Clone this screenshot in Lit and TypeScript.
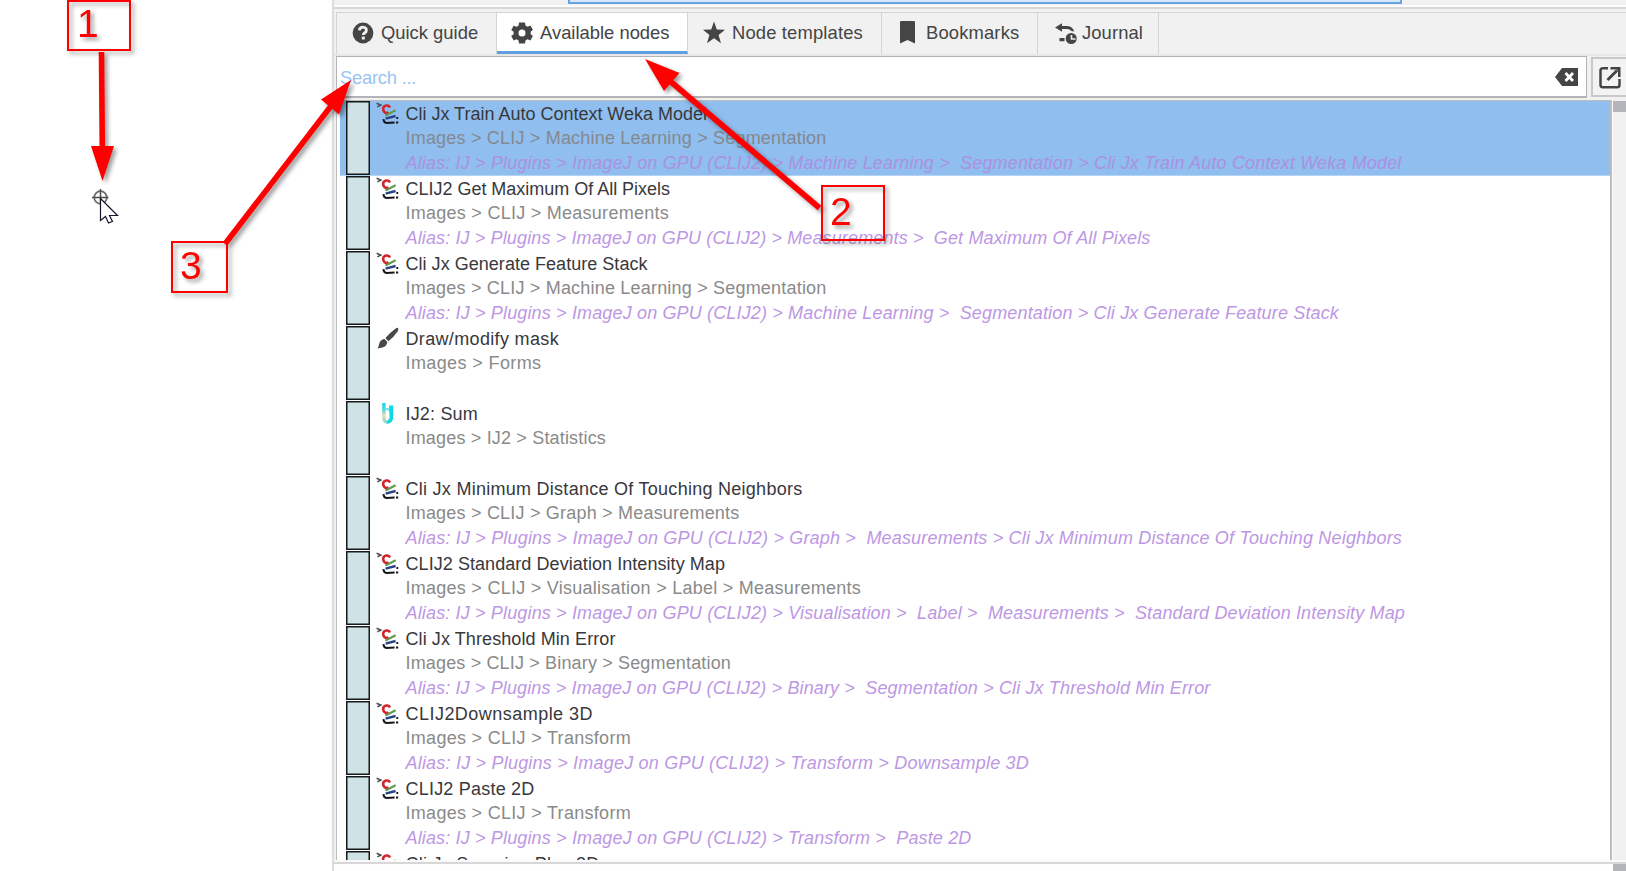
import { LitElement, html, css, svg, nothing } from "lit";
import { customElement } from "lit/decorators.js";

type IconKind = "clij" | "brush" | "ij";
/** `widths` holds the line lengths in pixels: title, path, alias. */
interface NodeRow { icon: IconKind; title: string; path: string; alias?: string; selected?: boolean; widths: number[]; }

const IJ = "Alias: IJ > Plugins > ImageJ on GPU (CLIJ2) > ";
const rows: NodeRow[] = [
  { icon: "clij", title: "Cli Jx Train Auto Context Weka Model", path: "Images > CLIJ > Machine Learning > Segmentation", alias: IJ + "Machine Learning >  Segmentation > Cli Jx Train Auto Context Weka Model", selected: true, widths: [301.5, 421, 996] },
  { icon: "clij", title: "CLIJ2 Get Maximum Of All Pixels", path: "Images > CLIJ > Measurements", alias: IJ + "Measurements >  Get Maximum Of All Pixels", widths: [264.5, 263.5, 745] },
  { icon: "clij", title: "Cli Jx Generate Feature Stack", path: "Images > CLIJ > Machine Learning > Segmentation", alias: IJ + "Machine Learning >  Segmentation > Cli Jx Generate Feature Stack", widths: [242, 421, 933.5] },
  { icon: "brush", title: "Draw/modify mask", path: "Images > Forms", widths: [153.5, 136] },
  { icon: "ij", title: "IJ2: Sum", path: "Images > IJ2 > Statistics", widths: [72.5, 200.5] },
  { icon: "clij", title: "Cli Jx Minimum Distance Of Touching Neighbors", path: "Images > CLIJ > Graph > Measurements", alias: IJ + "Graph >  Measurements > Cli Jx Minimum Distance Of Touching Neighbors", widths: [397, 334, 996.5] },
  { icon: "clij", title: "CLIJ2 Standard Deviation Intensity Map", path: "Images > CLIJ > Visualisation > Label > Measurements", alias: IJ + "Visualisation >  Label >  Measurements >  Standard Deviation Intensity Map", widths: [319.5, 455.5, 999.5] },
  { icon: "clij", title: "Cli Jx Threshold Min Error", path: "Images > CLIJ > Binary > Segmentation", alias: IJ + "Binary >  Segmentation > Cli Jx Threshold Min Error", widths: [210, 325.5, 805] },
  { icon: "clij", title: "CLIJ2Downsample 3D", path: "Images > CLIJ > Transform", alias: IJ + "Transform > Downsample 3D", widths: [187.5, 225.5, 623.5] },
  { icon: "clij", title: "CLIJ2 Paste 2D", path: "Images > CLIJ > Transform", alias: IJ + "Transform >  Paste 2D", widths: [129, 225.5, 566] },
  { icon: "clij", title: "Cli Jx Scorpion Plus 2D", path: "", widths: [194] },
];

const nodeIcons = {
  clij: svg`
    <path d="M.6 1.2 L4.8 3 L1.4 4.8" fill="none" stroke="#4c4c50" stroke-width="1.5"/>
    <path d="M14 5.6 C12.6 2.2 7.8 3.2 7.2 6.2 C6.8 9.6 9.6 12.4 12.6 10.4" fill="none" stroke="#d3232e" stroke-width="2.6"/>
    <path d="M9.4 13.6 L19.6 8.2" stroke="#5c9a4c" stroke-width="2.2"/>
    <path d="M9.6 16.6 L19.6 14" stroke="#2b4386" stroke-width="2.4"/>
    <path d="M7.4 17.2 Q7.8 21 10.6 20.9 L18.6 20.4" fill="none" stroke="#15161a" stroke-width="2"/>
    <path d="M20 20.4 H22.2 M20.4 15.9 H22.2" stroke="#15161a" stroke-width="2"/>`,
  brush: svg`
    <path d="M22 1 Q23 2 21.6 4.4 Q17 11 12.4 14.2 L9.4 11 Q13 6.4 19 2 Q21.2.4 22 1Z" fill="#484848"/>
    <path d="M8.4 12 L11.4 15 Q10.4 19.6 6.6 20.4 Q4 21 1.6 21.6 Q2.6 20 3 17.6 Q4 12.6 8.4 12Z" fill="#484848"/>`,
  ij: svg`
    <defs><linearGradient id="g" x1="0" y1="0" x2="0" y2="1"><stop offset="0" stop-color="#12d6e8"/><stop offset=".35" stop-color="#55d8dc"/><stop offset=".6" stop-color="#f3dcae"/><stop offset="1" stop-color="#5fd6d4"/></linearGradient></defs>
    <path d="M6.2 1 H9.6 V15.5 Q10 19.4 13 20.2 L12 22 Q6.2 21 6.2 15.5Z" fill="url(#g)"/>
    <path d="M9.6 7.4 Q13 5.8 13.6 9.4" fill="none" stroke="#4fdce4" stroke-width="1.6"/>
    <path d="M13 3.4 H17.2 V15.6 Q17 21 11.6 21.8 L11.2 18.8 Q13.6 18 13.6 15Z" fill="#0ed8e4"/>`,
};

@customElement("search-tabs")
export class SearchTabs extends LitElement {
  static styles = css`
    :host { display: block; }
    .tabs { display: flex; height: 42px; box-sizing: border-box; border-top: 1px solid #d4d4d4; border-left: 1px solid #d4d4d4; }
    .tab { display: flex; align-items: center; box-sizing: border-box; height: 41px; border-right: 1px solid #d4d4d4; background: #f1f1f1; font-size: 18.4px; color: #444; white-space: pre; padding-bottom: 2px; }
    .tab svg { flex: none; width: 22px; height: 24px; margin-right: 7px; }
    .guide { width: 160px; padding-left: 15px; }
    .available { width: 191px; padding: 1px 0 0 14px; background: #fff; border-bottom: 3px solid #5f9fe0; }
    .templates { width: 194px; padding-left: 15px; letter-spacing: 0.15px; }
    .bookmarks { width: 156px; padding-left: 14px; letter-spacing: 0.15px; }
    .journal { width: 121px; padding-left: 17px; letter-spacing: 0.1px; }
    .bookmarks svg { margin-right: 8px; }
    .journal svg { margin-right: 5px; }
  `;
  render() {
    const c = "#454545";
    return html`<div class="tabs">
      <div class="tab guide"><svg viewBox="0 0 22 24"><circle cx="11" cy="12" r="10.4" fill=${c}/><path d="M7.4 9.4 Q7.6 6.2 11 6.2 Q14.4 6.4 14.4 9.3 Q14.3 11 12.5 12 Q11.3 12.8 11.3 14" fill="none" stroke="#f1f1f1" stroke-width="2.8"/><rect x="9.8" y="15.6" width="3" height="2.9" fill="#f1f1f1"/></svg><span>Quick guide</span></div>
      <div class="tab available"><svg viewBox="0 0 22 24"><path fill-rule="evenodd" fill=${c} d="M8 1.500h6l.5 3.100 2 1.100 2.900-1.100 2.500 4.200-2.200 2v2.400l2.200 1.900-2.500 4.300-2.900-1.100-2 1.200-.5 3H8l-.5-3-2-1.200-2.800 1.100L.2 15.100l2.400-1.900V10.800L.2 8.900l2.500-4.200 2.800 1.100 2-1.100zM11 8.500a3.500 3.500 0 1 0 0 7a3.500 3.500 0 1 0 0-7z"/></svg><span>Available nodes</span></div>
      <div class="tab templates"><svg viewBox="0 0 22 24"><path fill=${c} d="M11 .6l2.800 7.800 8.400.3-6.600 5.200 2.400 8.300-7-4.900-7 4.900 2.400-8.300L-.2 8.700l8.400-.3z"/></svg><span>Node templates</span></div>
      <div class="tab bookmarks"><svg viewBox="0 0 22 24"><path fill=${c} d="M5 0h13q1 0 1 1v21.500l-7.500-3.500-7.500 3.500V1q0-1 1-1z"/></svg><span>Bookmarks</span></div>
      <div class="tab journal"><svg viewBox="0 0 22 24"><path fill=${c} d="M0 6.500l7-4.300v2.800h5.500q4.800.3 6.800 5.600l-2.900-.6Q14.700 8 12.200 8H7v2.800zM4.500 17h5v3.200h-5z"/><circle cx="16.200" cy="17.500" r="5.500" fill=${c}/><path d="M16.500 14v4h4" fill="none" stroke="#f1f1f1" stroke-width="1.600"/></svg><span>Journal</span></div>
    </div>`;
  }
}

@customElement("node-row")
export class NodeRowElement extends LitElement {
  static properties = { row: { attribute: false } };
  declare row: NodeRow;
  static styles = css`
    :host { display: block; flex: none; }
    .row { display: flex; height: 75px; box-sizing: border-box; padding-left: 6px; background: #fff; }
    .selected { background: linear-gradient(#8fbeef 0 74px, #b4d4f4 74px 75px); }
    .bar { flex: none; width: 24px; height: 74px; box-sizing: border-box; border: 1px solid #15191a; background: #cfe2e5; box-shadow: inset 0 0 0 0.5px #15191a; }
    .icon { flex: none; width: 24px; height: 23px; margin: 1px 5px 0 6px; }
    .text { display: flex; flex-direction: column; white-space: pre; font-size: 18px; padding-left: 0.5px; }
    .title { height: 25px; line-height: 27px; color: #38383c; }
    .path { height: 24px; line-height: 25px; color: #8a8a8a; }
    .alias { height: 25px; line-height: 27px; color: #bd97e4; font-style: italic; }
    .selected .alias { color: #ac90e2; }
    .selected .path { color: #84898f; }
  `;
  /** Spreads each line's letters so that it fills its stated width. */
  protected firstUpdated() {
    this.renderRoot.querySelectorAll<HTMLElement>(".text span").forEach((line, i) => {
      const want = this.row.widths[i];
      const count = line.textContent?.length ?? 0;
      if (!want || !count) return;
      line.style.letterSpacing = `${(want - line.getBoundingClientRect().width) / count}px`;
    });
  }
  render() {
    const r = this.row;
    return html`<div class="row ${r.selected ? "selected" : ""}">
      <div class="bar"></div><svg class="icon" viewBox="0 0 24 23">${nodeIcons[r.icon]}</svg>
      <div class="text"><div class="title"><span>${r.title}</span></div>${r.path ? html`<div class="path"><span>${r.path}</span></div>` : nothing}${r.alias ? html`<div class="alias"><span>${r.alias}</span></div>` : nothing}</div>
    </div>`;
  }
}

@customElement("app-root")
export class AppRoot extends LitElement {
  static styles = css`
    :host { display: block; position: relative; width: 1626px; height: 871px; overflow: hidden; background: #fefefe; font-family: "Liberation Sans", Arial, sans-serif; }
    .page { display: flex; height: 100%; }
    .canvas { flex: none; width: 332px; background: #fff; }
    .side { flex: 1; min-width: 0; display: flex; flex-direction: column; box-sizing: border-box; border-left: 2px solid #dcdcdc; background: #f1f1f1; }
    .top { flex: none; display: flex; height: 7px; box-sizing: border-box; padding-left: 234px; border-bottom: 2px solid #fcfcfc; }
    .strip { width: 834px; height: 4px; box-sizing: border-box; border: 2px solid #67a3e4; border-top: 0; background: #d9e9fa; }
    .split { flex: none; height: 2px; background: #d7d7d7; margin-bottom: 3px; }
    .tabs { display: block; margin-left: 2px; }
    .seam { flex: none; height: 2px; background: #e7e7e7; }
    .search { flex: none; display: flex; height: 44px; gap: 4px; padding-left: 2px; box-sizing: border-box; }
    .field { flex: none; width: 1251px; height: 42px; box-sizing: border-box; border: 1px solid #b4b4b8; border-bottom-width: 2px; background: #fff; display: flex; align-items: center; justify-content: space-between; padding: 2px 7px 0 3px; font-size: 18.4px; letter-spacing: -0.25px; color: #9ac4f1; }
    .clear { width: 25px; height: 20px; margin-bottom: 2px; }
    .open { flex: none; width: 42px; height: 40px; margin-top: 1px; box-sizing: border-box; border: 2px solid #c9c9cd; background: #f3f3f3; padding: 7px 0 0 6px; }
    .open svg { width: 22px; height: 23px; display: block; }
    .body { flex: none; display: flex; height: 760px; padding-left: 2px; box-sizing: border-box; background: #f1f1f1; }
    .list { width: 1276px; height: 760px; box-sizing: border-box; border: 1px solid #bdbdbd; border-bottom: 0; border-right-width: 2px; background: #fff; padding-left: 3px; overflow: hidden; display: flex; flex-direction: column; }
    .track { flex: 1; border-left: 1px solid #fcfcfc; }
    .thumb { height: 11px; background: #b4b5ba; margin-top: 1px; }
    .base { flex: none; height: 11px; border-top: 2px solid #fafafa; box-sizing: border-box; display: flex; background: #fefefe; }
    .rule { flex: 1; border-top: 2px solid #d7d7d7; display: flex; justify-content: flex-end; }
    .corner { width: 13px; height: 7px; background: #b4b5ba; }
    .notes { position: absolute; left: 0; top: 0; width: 1626px; height: 871px; pointer-events: none; filter: drop-shadow(3px 3px 2px rgba(0,0,0,.38)); }
    .cursor { position: absolute; left: 90px; top: 186px; width: 32px; height: 42px; }
    .num { font-family: "Liberation Sans", Arial, sans-serif; font-size: 39px; fill: #f00; }
  `;
  render() {
    const c = "#454545";
    return html`<div class="page">
      <div class="canvas"></div>
      <div class="side">
        <div class="top"><div class="strip"></div></div>
        <div class="split"></div>
        <search-tabs class="tabs"></search-tabs>
        <div class="seam"></div>
        <div class="search">
          <div class="field"><span>Search ...</span><svg class="clear" viewBox="0 0 25 20"><path fill=${c} d="M8 1H24V19H8L1 10Z"/><path d="M11.500 6L19 14M19 6L11.500 14" stroke="#fff" stroke-width="2.800"/></svg></div>
          <div class="open"><svg viewBox="0 0 22 23"><path d="M9 2.200H4Q1.500 2.200 1.500 4.500V19Q1.500 21.300 4 21.300H18Q20.500 21.300 20.500 19V13" fill="none" stroke=${c} stroke-width="2.500"/><path d="M8.500 14L18 4.500" stroke=${c} stroke-width="2.800"/><path d="M11.500 1H21.500V11H19V5L17.500 3.500H11.500Z" fill=${c}/></svg></div>
        </div>
        <div class="body"><div class="list">${rows.map((r) => html`<node-row .row=${r}></node-row>`)}</div><div class="track"><div class="thumb"></div></div></div>
        <div class="base"><div class="rule"><div class="corner"></div></div></div>
      </div>
    </div>
    <svg class="cursor" viewBox="0 0 32 42"><circle cx="10.500" cy="11.500" r="6.300" fill="none" stroke="#6a6d66" stroke-width="1.800"/><path d="M2 11.500H18.500M10.500 3V19" stroke="#4d504a" stroke-width="1.500"/><path d="M10.500 12.500V34.500L15.500 30.500L18.500 37L22.500 35.500L19.500 29.500H27.500Z" fill="#fff" stroke="#16162a" stroke-width="1.200"/></svg>
    <svg class="notes" viewBox="0 0 1626 871">
      <g fill="none" stroke="#f00" stroke-width="2"><rect x="68" y="1" width="62" height="49"/><rect x="172" y="242" width="55" height="50"/><rect x="822" y="186" width="62" height="54"/></g>
      <g stroke="#f00" stroke-width="5.600"><path d="M101.500 52L102.300 148"/><path d="M225 244L331 106"/><path d="M819.500 208L670 81"/></g>
      <g fill="#f00"><path d="M102.500 181L91 146H114Z"/><path d="M351 80L321 99.500L339 114.500Z"/><path d="M645 59L679.500 73L664 91Z"/></g>
      <text class="num" x="77" y="37">1</text><text class="num" x="180" y="279">3</text><text class="num" x="830" y="225">2</text>
    </svg>`;
  }
}
